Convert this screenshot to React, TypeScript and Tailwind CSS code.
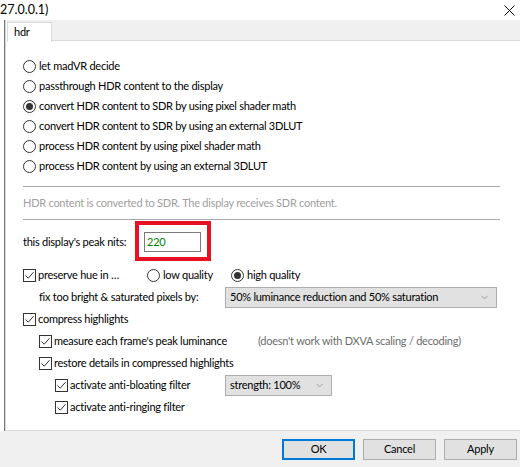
import { ChevronDown } from 'lucide-react'

const font = { fontFamily: 'Lato, "Noto Sans", sans-serif' }

const radios = [
  { label: 'let madVR decide', checked: false },
  { label: 'passthrough HDR content to the display', checked: false },
  { label: 'convert HDR content to SDR by using pixel shader math', checked: true },
  { label: 'convert HDR content to SDR by using an external 3DLUT', checked: false },
  { label: 'process HDR content by using pixel shader math', checked: false },
  { label: 'process HDR content by using an external 3DLUT', checked: false },
]

function Radio({ checked }: { checked: boolean }) {
  return (
    <span className="flex h-[13px] w-[13px] shrink-0 items-center justify-center rounded-full border border-[#333] bg-white">
      {checked && <span className="h-[7px] w-[7px] rounded-full bg-[#333]" />}
    </span>
  )
}

function Check() {
  return (
    <span className="flex h-[13px] w-[13px] shrink-0 items-center justify-center border border-[#333] bg-white">
      <svg width="11" height="11" viewBox="0 0 11 11" fill="none">
        <path d="M1.5 5.5 L4.2 8.2 L9.5 2.2" stroke="#333" strokeWidth="1" />
      </svg>
    </span>
  )
}

function Select({ text, width }: { text: string; width: string }) {
  return (
    <div className={`flex h-[21px] shrink-0 items-center justify-between border border-[#adadad] bg-[#e1e1e1] pl-[4px] pr-[6px] ${width}`}>
      <span>{text}</span>
      <ChevronDown className="h-[11px] w-[11px] text-[#666]" strokeWidth={1.2} />
    </div>
  )
}

function CheckRow({ label, indent }: { label: string; indent: string }) {
  return (
    <div className={`flex h-5 items-center gap-[2px] ${indent}`}>
      <Check />
      <span>{label}</span>
    </div>
  )
}

export default function App() {
  return (
    <div
      className="flex h-[467px] w-[520px] flex-col whitespace-nowrap bg-white text-[11px] tracking-[-0.25px] text-black"
      style={font}
    >
      {/* title bar */}
      <div className="flex h-[20px] shrink-0 items-center justify-between">
        <span className="text-[12.5px] leading-none tracking-normal">27.0.0.1)</span>
        <svg width="11" height="11" viewBox="0 0 11 11" className="mr-[5px]">
          <path d="M0.5 0.5 L10.5 10.5 M10.5 0.5 L0.5 10.5" stroke="#000" strokeWidth="1" />
        </svg>
      </div>

      <div className="ml-[4px] flex flex-1 flex-col border-l border-[#7a7a7a]">
        <div className="flex flex-1 flex-col border-l border-[#d4d4d4]">
          {/* tab strip */}
          <div className="flex h-[21px] shrink-0 items-end bg-[#f0f0f0]">
            <div className="w-[1px] self-stretch bg-white" />
            <div className="relative -mb-[1px] flex h-[20px] w-[45px] items-center border border-b-0 border-[#d9d9d9] bg-white pl-[6px]">
              hdr
            </div>
            <div className="h-[1px] flex-1 bg-[#d9d9d9]" />
          </div>

          {/* panel */}
          <div className="flex flex-1 flex-col border-b border-[#d9d9d9] pl-[17px] pr-[20px] pt-[15px]">
            {radios.map(r => (
              <div key={r.label} className="flex h-5 items-center gap-[3px]">
                <Radio checked={r.checked} />
                <span>{r.label}</span>
              </div>
            ))}

            <div className="mt-[10px] h-[1px] bg-[#a8a8a8]" />
            <div className="mt-[6px] flex h-5 items-center text-[#a0a0a0]">
              HDR content is converted to SDR. The display receives SDR content.
            </div>
            <div className="mt-[6px] h-[1px] bg-[#a8a8a8]" />

            <div className="mt-[12px] flex h-[20px] items-center">
              <span className="w-[121px] shrink-0">this display's peak nits:</span>
              <div className="relative flex h-[20px] w-[57px] shrink-0 items-center border border-[#7a7a7a] pl-[2px] text-[#008000]">
                220
                <div className="absolute -left-[10px] -top-[12px] h-[40px] w-[76px] border-[4px] border-[#e81123]" />
              </div>
            </div>

            <div className="mt-[13px] flex flex-col gap-[2px]">
              <div className="flex h-5 items-center">
                <div className="flex w-[124px] shrink-0 items-center gap-[2px]">
                  <Check />
                  <span>preserve hue in …</span>
                </div>
                <div className="flex w-[84px] shrink-0 items-center gap-[3px]">
                  <Radio checked={false} />
                  <span>low quality</span>
                </div>
                <div className="flex items-center gap-[3px]">
                  <Radio checked={true} />
                  <span>high quality</span>
                </div>
              </div>

              <div className="flex h-5 items-center pl-[16px]">
                <span className="w-[186px] shrink-0">fix too bright &amp; saturated pixels by:</span>
                <Select text="50% luminance reduction and 50% saturation" width="w-[272px]" />
              </div>

              <CheckRow label="compress highlights" indent="" />

              <div className="flex h-5 items-center pl-[16px]">
                <div className="flex w-[219px] shrink-0 items-center gap-[2px]">
                  <Check />
                  <span>measure each frame's peak luminance</span>
                </div>
                <span className="text-[#6d6d6d]">(doesn't work with DXVA scaling / decoding)</span>
              </div>

              <CheckRow label="restore details in compressed highlights" indent="pl-[16px]" />

              <div className="flex h-5 items-center pl-[32px]">
                <div className="flex w-[170px] shrink-0 items-center gap-[2px]">
                  <Check />
                  <span>activate anti-bloating filter</span>
                </div>
                <Select text="strength: 100%" width="w-[107px]" />
              </div>

              <CheckRow label="activate anti-ringing filter" indent="pl-[32px]" />
            </div>
          </div>
        </div>
      </div>

      {/* footer */}
      <div className="flex h-[36px] shrink-0 justify-end gap-[8px] bg-[#f0f0f0] pr-[3px] pt-[8px]">
        <button className="h-[21px] w-[73px] border-2 border-[#0078d7] bg-[#e1e1e1]">OK</button>
        <button className="h-[21px] w-[73px] border border-[#adadad] bg-[#e1e1e1]">Cancel</button>
        <button className="h-[21px] w-[73px] border border-[#adadad] bg-[#e1e1e1]">Apply</button>
      </div>
    </div>
  )
}
